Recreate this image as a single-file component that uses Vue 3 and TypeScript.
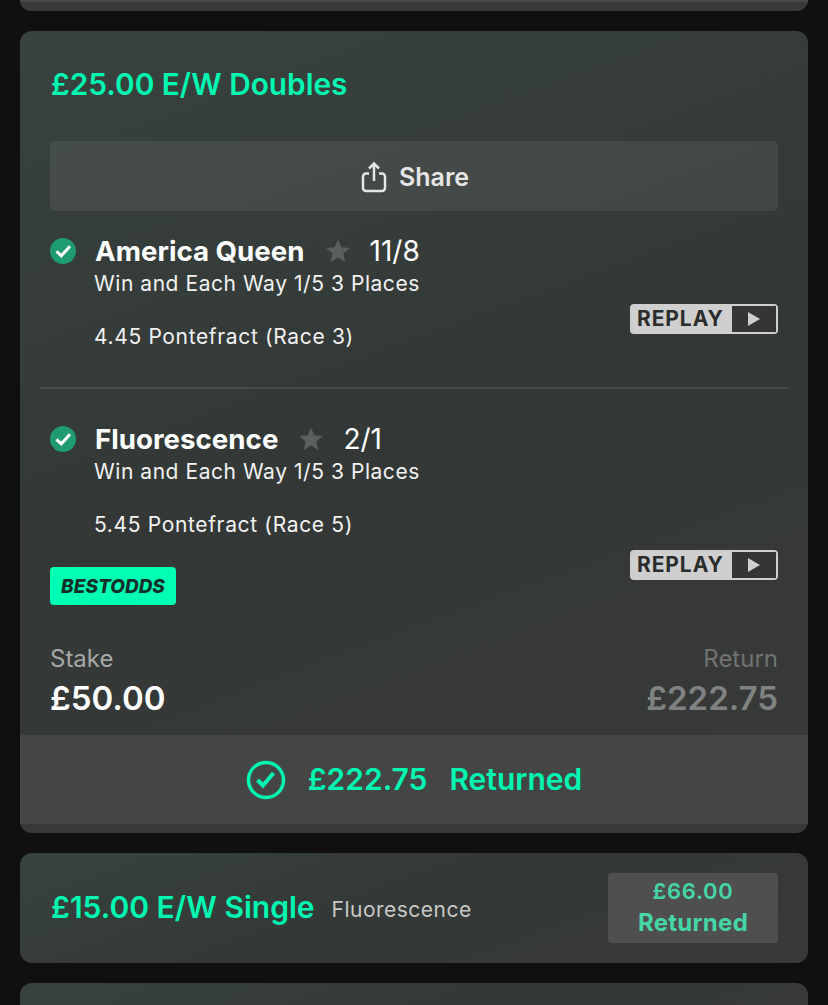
<template>
  <div class="page">
    <div class="card stub"><div class="stub-bar"></div></div>

    <div class="card main">
      <h2 class="title">£25.00 E/W Doubles</h2>
      <button class="share">
        <svg width="26" height="32" viewBox="0 0 26 32" fill="none" stroke="currentColor" stroke-width="2.5">
          <path d="M8 12.500H5A3 3 0 0 0 2 15.500V27A3 3 0 0 0 5 30H21A3 3 0 0 0 24 27V15.500A3 3 0 0 0 21 12.500H18" />
          <path d="M13 20V3M8 7.500L13 2.500L18 7.500" />
        </svg>
        <span>Share</span>
      </button>

      <div v-for="(leg, i) in legs" :key="leg.name" :class="['leg', { last: i === legs.length - 1 }]">
        <div class="leg-top">
          <svg class="tick" width="26" height="26" viewBox="0 0 26 26">
            <circle cx="13" cy="13" r="13" fill="#1f9b70" />
            <path d="M6.500 13.300L11.300 17.800L20 8.300" fill="none" stroke="#fff" stroke-width="3" />
          </svg>
          <span class="name">{{ leg.name }}</span>
          <svg class="star" width="26" height="26" viewBox="0 0 26 26">
            <path d="M13 1.500L16.300 9.300L24.800 10L18.400 15.600L20.300 23.900L13 19.500L5.700 23.900L7.600 15.600L1.200 10L9.700 9.300Z" fill="#5b605e" />
          </svg>
          <span class="odds">{{ leg.odds }}</span>
        </div>
        <div class="market">Win and Each Way 1/5 3 Places</div>
        <div class="race-row">
          <span class="race">{{ leg.race }}</span>
          <div class="replay">
            <span class="replay-label">REPLAY</span>
            <span class="replay-play"><i></i></span>
          </div>
        </div>
        <div v-if="leg.best" class="best">BESTODDS</div>
      </div>

      <div class="totals">
        <div>
          <div class="total-label">Stake</div>
          <div class="total-value">£50.00</div>
        </div>
        <div class="right">
          <div class="total-label faint">Return</div>
          <div class="total-value dim">£222.75</div>
        </div>
      </div>

      <div class="returned">
        <svg width="40" height="40" viewBox="0 0 40 40" fill="none" stroke="#00f8b2" stroke-width="3.500">
          <circle cx="20" cy="20" r="17.500" />
          <path d="M11.500 20L17 25.500L27.500 13" stroke-width="4" />
        </svg>
        <span class="returned-amount">£222.75</span>
        <span class="returned-word">Returned</span>
      </div>
    </div>

    <div class="card single">
      <span class="single-title">£15.00 E/W Single</span>
      <span class="single-name">Fluorescence</span>
      <div class="single-badge">
        <div class="amount">£66.00</div>
        <div class="strong">Returned</div>
      </div>
    </div>

    <div class="card single"></div>
  </div>
</template>

<script setup lang="ts">
const legs = [
  { name: 'America Queen', odds: '11/8', race: '4.45 Pontefract (Race 3)', best: false },
  { name: 'Fluorescence', odds: '2/1', race: '5.45 Pontefract (Race 5)', best: true }
];
</script>

<style>
html,
body {
  margin: 0;
  background: #101010;
  overflow: hidden;
}
</style>

<style scoped>
.page {
  height: 1005px;
  overflow: hidden;
  padding: 0 20px;
  display: flex;
  flex-direction: column;
  gap: 20px;
  font-family: Inter, "Liberation Sans", sans-serif;
  color: #fff;
}

.card {
  flex: none;
  border-radius: 12px;
  background: linear-gradient(160deg, #38423f 0%, #333836 50%, #393a39 100%);
}

.stub {
  height: 11px;
  background: #3a3a3a;
  border-radius: 0 0 12px 12px;
}

.stub-bar {
  height: 2px;
  background: #474847;
}

.main {
  height: 802px;
  padding: 0 0 9px;
  box-sizing: border-box;
  display: flex;
  flex-direction: column;
}

.title {
  margin: 0;
  padding: 35px 31px 0;
  height: 74px;
  box-sizing: border-box;
  font-size: 29.800px;
  line-height: 36px;
  font-weight: 600;
  color: #00f8b2;
}

.share {
  margin: 36px 30px 0;
  padding: 1px 0 0 2px;
  height: 70px;
  flex: none;
  border: 0;
  border-radius: 5px;
  background: rgba(255, 255, 255, 0.07);
  color: #e6e6e6;
  display: flex;
  align-items: center;
  justify-content: center;
  gap: 12px;
  font-family: inherit;
  font-size: 25px;
  font-weight: 600;
}

.leg {
  margin: 0 20px;
  padding: 25px 10px 0;
  height: 178px;
  box-sizing: border-box;
  border-bottom: 2px solid #474c4a;
}

.leg + .leg {
  padding-top: 35px;
}

.leg.last {
  height: 247px;
  border-bottom: 0;
  position: relative;
}

.leg-top {
  display: flex;
  align-items: center;
  height: 30px;
}

.tick {
  margin-right: 19px;
}

.name {
  font-size: 27.700px;
  font-weight: 700;
}

.star {
  margin: 0 19px 0 20px;
}

.odds {
  font-size: 28px;
}

.market {
  margin-left: 44px;
  margin-top: 3px;
  font-size: 21px;
  line-height: 30px;
  letter-spacing: 0.55px;
  color: #f2f2f2;
}

.race-row {
  margin-left: 44px;
  margin-top: 23px;
  display: flex;
  justify-content: space-between;
  font-size: 21px;
  line-height: 30px;
  letter-spacing: 0.65px;
  color: #f2f2f2;
}

.race {
  display: block;
}

.replay {
  margin-top: -18px;
  width: 148px;
  height: 30px;
  box-sizing: border-box;
  display: flex;
  border: 2px solid #cfcfcf;
  border-radius: 4px;
  background: #cfcfcf;
}

.replay-label {
  width: 100px;
  padding-left: 5px;
  box-sizing: border-box;
  color: #2b2d2c;
  font-size: 21px;
  line-height: 26px;
  font-weight: 700;
  letter-spacing: 0.9px;
}

.replay-play {
  flex: 1;
  background: #333635;
  display: flex;
  align-items: center;
  justify-content: center;
}

.replay-play i {
  border-left: 12px solid #cfcfcf;
  border-top: 7px solid transparent;
  border-bottom: 7px solid transparent;
}

.last .replay {
  margin-top: 40px;
}

.best {
  position: absolute;
  left: 10px;
  top: 178px;
  width: 126px;
  height: 38px;
  border-radius: 4px;
  background: #00ffb3;
  color: #123029;
  display: flex;
  align-items: center;
  justify-content: center;
  font-size: 19px;
  font-weight: 800;
  font-style: italic;
}

.totals {
  flex: 1;
  padding: 0 30px;
  display: flex;
  justify-content: space-between;
  align-items: flex-start;
  margin-top: 8px;
}

.right {
  text-align: right;
}

.total-label {
  font-size: 24px;
  line-height: 30px;
  color: #a6a8a7;
}

.total-value {
  font-size: 33px;
  line-height: 48px;
  font-weight: 600;
}

.dim {
  color: #808281;
}

.faint {
  color: #707271;
}

.returned {
  height: 89px;
  flex: none;
  background: #444645;
  padding-bottom: 2px;
  box-sizing: border-box;
  display: flex;
  align-items: center;
  justify-content: center;
  gap: 22px;
  font-size: 30px;
  font-weight: 600;
  color: #00f8b2;
}

.returned svg {
  margin-top: 2px;
}

.single {
  height: 110px;
  padding: 0 30px 2px 31px;
  box-sizing: border-box;
  display: flex;
  align-items: center;
}

.single-title {
  font-size: 30px;
  font-weight: 600;
  color: #00f8b2;
}

.single-name {
  margin-left: 17px;
  margin-top: 4px;
  font-size: 21px;
  letter-spacing: 0.5px;
  color: #c8c8c8;
}

.single-badge {
  margin-left: auto;
  margin-top: 2px;
  width: 170px;
  height: 70px;
  border-radius: 4px;
  background: #4f4f4f;
  color: #45d6a8;
  line-height: 31px;
  text-align: center;
  padding-top: 3px;
  box-sizing: border-box;
}

.amount {
  font-size: 22px;
  font-weight: 600;
  letter-spacing: 0.7px;
}

.strong {
  font-size: 24px;
  font-weight: 700;
  letter-spacing: 0.3px;
}
</style>
